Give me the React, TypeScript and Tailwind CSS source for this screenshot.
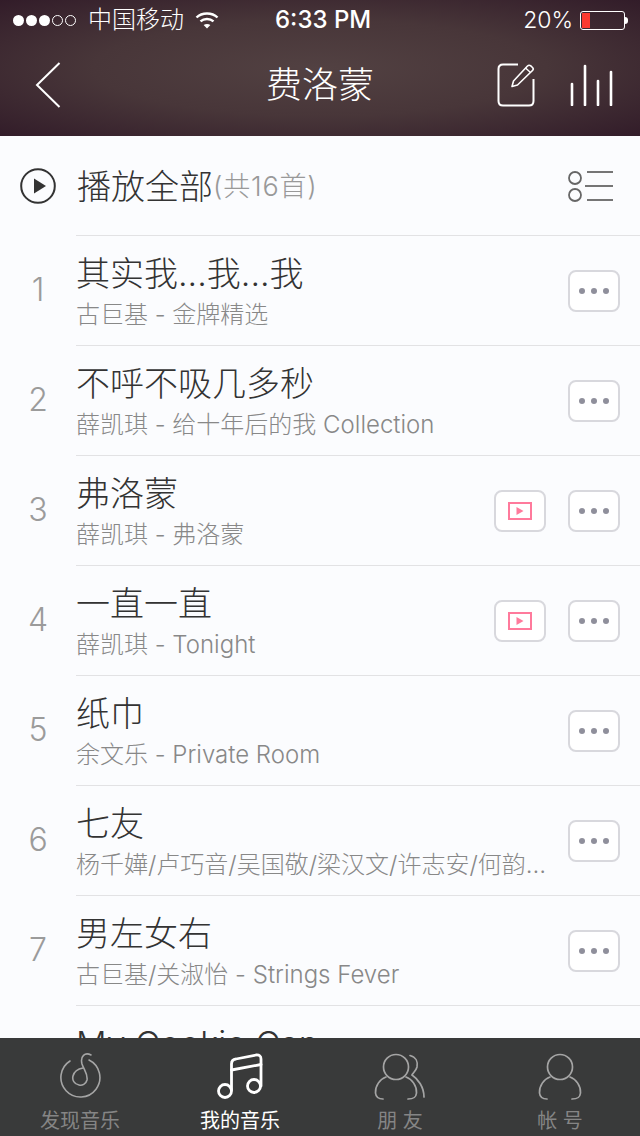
const FONT = "font-['Inter','Noto_Sans_CJK_SC',sans-serif]";

interface Song {
  no: number;
  title: string;
  sub: string;
  mv?: boolean;
}

const songs: Song[] = [
  { no: 1, title: '其实我...我...我', sub: '古巨基 - 金牌精选' },
  { no: 2, title: '不呼不吸几多秒', sub: '薛凯琪 - 给十年后的我 Collection' },
  { no: 3, title: '弗洛蒙', sub: '薛凯琪 - 弗洛蒙', mv: true },
  { no: 4, title: '一直一直', sub: '薛凯琪 - Tonight', mv: true },
  { no: 5, title: '纸巾', sub: '余文乐 - Private Room' },
  { no: 6, title: '七友', sub: '杨千嬅/卢巧音/吴国敬/梁汉文/许志安/何韵诗/陈奕迅' },
  { no: 7, title: '男左女右', sub: '古巨基/关淑怡 - Strings Fever' },
  { no: 8, title: 'My Cookie Can', sub: '卫兰 - My Cookie Can' },
];

const StatusBar = () => (
  <div className="flex h-10 items-center justify-between text-white">
    <div className="flex items-center">
      <div className="ml-[13px] flex items-center gap-[2px]">
        <span className="h-[11px] w-[11px] rounded-full bg-white" />
        <span className="h-[11px] w-[11px] rounded-full bg-white" />
        <span className="h-[11px] w-[11px] rounded-full bg-white" />
        <span className="h-[11px] w-[11px] rounded-full border border-white" />
        <span className="h-[11px] w-[11px] rounded-full border border-white" />
      </div>
      <span className="ml-[12px] text-[24px] leading-none font-light">中国移动</span>
      <svg className="ml-[11px]" width="24" height="18" viewBox="0 0 24 18" fill="none" stroke="white" strokeWidth="2.4">
        <path d="M1.5 6.5 C7 1.2 17 1.2 22.5 6.5" />
        <path d="M5.5 10.4 C9 7.2 15 7.2 18.5 10.4" />
        <path d="M12 17.5 L8.6 14 C10.6 12.6 13.4 12.6 15.4 14 Z" fill="white" stroke="none" />
      </svg>
    </div>
    <span className="absolute left-[275px] text-[24px] leading-none font-medium">6:33 PM</span>
    <div className="flex items-center">
      <span className="text-[23px] leading-none font-light">20%</span>
      <div className="ml-[7px] flex h-[19px] w-[45px] items-center rounded-[3px] border border-white px-[1px]">
        <div className="h-[15px] w-[8px] bg-[#fc3a30]" />
      </div>
      <div className="mr-[12px] h-[7px] w-[3px] rounded-r-full bg-white" />
    </div>
  </div>
);

const NavBar = () => (
  <div className="relative flex h-24 items-center justify-between pb-[6px] text-white">
    <svg className="ml-[35px]" width="26" height="46" viewBox="0 0 26 46" fill="none" stroke="white" strokeWidth="2">
      <path d="M24.5 1 L2 23 L24.5 45" />
    </svg>
    <span className="absolute left-0 right-0 text-center text-[36px] leading-none font-light">费洛蒙</span>
    <div className="mr-[26px] flex items-center gap-[35px]">
      <svg width="38" height="44" viewBox="0 0 38 44" fill="none" stroke="white" strokeWidth="2">
        <path d="M21 1.5 H6 Q1.5 1.5 1.5 6 V38 Q1.5 42.5 6 42.5 H32 Q36.5 42.5 36.5 38 V16" />
        <path d="M15 23.5 L16.5 18 L30.5 3 Q32 1.5 34 3 L35.5 4.5 Q37 6 35.5 7.5 L20.5 22 Z" strokeWidth="1.6" strokeLinejoin="round" />
        <path d="M28.5 5 L33.5 9.5" strokeWidth="1.4" />
      </svg>
      <svg width="44" height="42" viewBox="0 0 44 42" fill="none" stroke="white" strokeWidth="2.6" strokeLinecap="round">
        <path d="M2 41 V20" />
        <path d="M15 41 V2" />
        <path d="M28 41 V17" />
        <path d="M41 41 V8" />
      </svg>
    </div>
  </div>
);

const MoreButton = () => (
  <div className="flex h-[42px] w-[52px] items-center justify-center gap-[6px] rounded-lg border-2 border-[#d8d8dd] bg-white">
    <span className="h-[6px] w-[6px] rounded-full bg-[#8f8f9b]" />
    <span className="h-[6px] w-[6px] rounded-full bg-[#8f8f9b]" />
    <span className="h-[6px] w-[6px] rounded-full bg-[#8f8f9b]" />
  </div>
);

const MvButton = () => (
  <div className="flex h-[42px] w-[52px] items-center justify-center rounded-lg border-2 border-[#d8d8dd] bg-white">
    <div className="flex h-[18px] w-[24px] items-center justify-center border-2 border-[#ff7a9c]">
      <svg width="8" height="8" viewBox="0 0 8 8">
        <path d="M0.5 0 L7.5 4 L0.5 8 Z" fill="#ff7a9c" />
      </svg>
    </div>
  </div>
);

const SongRow = ({ song }: { song: Song }) => (
  <div className="flex h-[110px] shrink-0">
    <div className="flex w-[76px] shrink-0 items-center justify-center pb-[1px] text-[32px] font-light text-[#9b9b9b]">{song.no}</div>
    <div className="flex min-w-0 flex-1 items-center border-t border-[#e2e2e4] pr-5">
      <div className="min-w-0 flex-1">
        <div className="h-[46px] text-[34px] leading-[48px] font-light whitespace-nowrap text-[#333333]">{song.title}</div>
        <div className="mt-[2px] w-[474px] truncate text-[24px] leading-[34px] font-light text-[#888888]">{song.sub}</div>
      </div>
      {song.mv && (
        <div className="mr-[22px]">
          <MvButton />
        </div>
      )}
      <MoreButton />
    </div>
  </div>
);

const TabItem = ({ label, active, icon }: { label: string; active?: boolean; icon: React.ReactNode }) => (
  <div className="flex w-40 flex-col items-center pt-[14px]">
    <div className="flex h-[50px] items-center">{icon}</div>
    <span className={active ? 'mt-[6px] text-[20px] leading-[26px] text-white' : 'mt-[6px] text-[20px] leading-[26px] text-[#858585]'}>
      {label}
    </span>
  </div>
);

const TabBar = () => (
  <div className="flex h-[98px] shrink-0 bg-[#393a3a]">
    <TabItem
      label="发现音乐"
      icon={
        <svg width="44" height="48" viewBox="0 0 44 48" fill="none" stroke="#a5a5a5" strokeWidth="1.6" strokeLinecap="round">
          <path d="M12 8 A19.5 19.5 0 1 0 31 7" />
          <path d="M33 2 C27 -1 22 3 24 11 C26 17 30 21 29 27 C28 31 24 33 21 32 C16 31 14 27 15 23 C16 19 19 16 25 15" />
        </svg>
      }
    />
    <TabItem
      active
      label="我的音乐"
      icon={
        <svg width="48" height="48" viewBox="0 0 48 48" fill="none" stroke="white" strokeWidth="2.8" strokeLinecap="round" strokeLinejoin="round">
          <circle cx="9" cy="38" r="6.5" />
          <circle cx="38" cy="33" r="6.5" />
          <path d="M15.5 37 V11 Q15.5 6.5 20 6 L40 2 Q45 1.5 45 6 V33" />
          <path d="M15.5 17 L45 11.5" />
        </svg>
      }
    />
    <TabItem
      label="朋 友"
      icon={
        <svg width="52" height="48" viewBox="0 0 52 48" fill="none" stroke="#a5a5a5" strokeWidth="1.7" strokeLinecap="round">
          <circle cx="22" cy="14" r="12.5" />
          <path d="M12 24 C6 26 1 33 1.5 40 C2 45 5 46 9 46" />
          <path d="M32 24 C38 26 43 33 42.5 40 C42 45 39 46 34 46" />
          <path d="M36 2.5 C42 4 44 9 43 14 C42 18 39 20 38 22 C44 26 50 34 50 44" />
        </svg>
      }
    />
    <TabItem
      label="帐 号"
      icon={
        <svg width="44" height="48" viewBox="0 0 44 48" fill="none" stroke="#a5a5a5" strokeWidth="1.7" strokeLinecap="round">
          <circle cx="22" cy="14" r="12.5" />
          <path d="M12 24 C6 26 1 33 1.5 40 C2 45 5 46 9 46" />
          <path d="M32 24 C38 26 43 33 42.5 40 C42 45 39 46 34 46" />
        </svg>
      }
    />
  </div>
);

export default function App() {
  return (
    <div className={`relative flex h-[1136px] w-[640px] flex-col overflow-hidden bg-[#fbfcfe] ${FONT}`}>
      <div className="h-[136px] shrink-0 bg-[radial-gradient(ellipse_farthest-corner_at_center,#524142_0%,#483639_50%,#321c29_100%)]">
        <StatusBar />
        <NavBar />
      </div>
      <div className="flex min-h-0 flex-1 flex-col overflow-hidden">
        <div className="flex h-[99px] shrink-0 items-center pr-[26px] pl-5">
          <svg width="36" height="36" viewBox="0 0 36 36" fill="none">
            <circle cx="18" cy="18" r="16.8" stroke="#333333" strokeWidth="2" />
            <path d="M14 10.5 L26 18 L14 25.5 Z" fill="#333333" />
          </svg>
          <span className="mt-[2px] ml-[21px] text-[34px] leading-none font-light text-[#333333]">播放全部</span>
          <span className="mt-[2px] text-[27px] leading-none font-light tracking-[0.8px] text-[#999999]">(共16首)</span>
          <svg className="ml-auto" width="46" height="32" viewBox="0 0 46 32" fill="none" stroke="#666666" strokeWidth="1.8">
            <circle cx="7" cy="8" r="6" />
            <circle cx="7" cy="25" r="6" />
            <path d="M19 2 H45" />
            <path d="M17 16 H45" />
            <path d="M19 30 H45" />
          </svg>
        </div>
        {songs.map((song) => (
          <SongRow key={song.no} song={song} />
        ))}
      </div>
      <TabBar />
    </div>
  );
}
